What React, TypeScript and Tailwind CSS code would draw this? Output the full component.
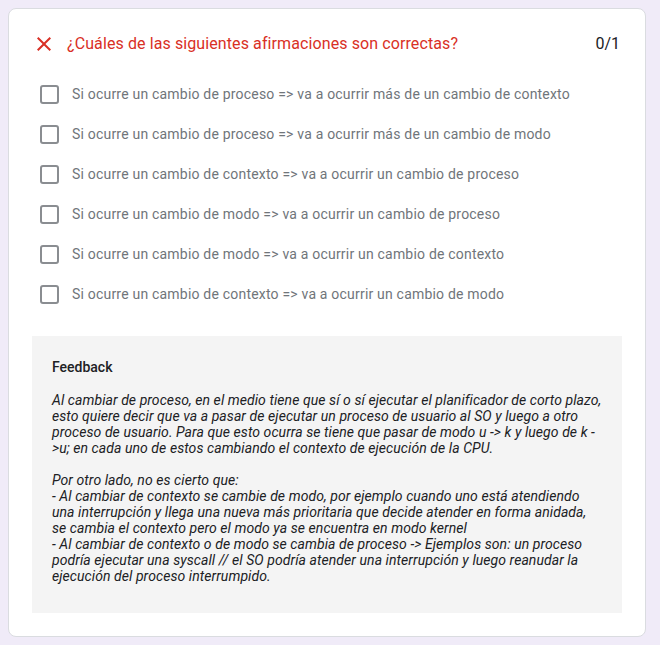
import React from 'react';

const options = [
  'Si ocurre un cambio de proceso => va a ocurrir más de un cambio de contexto',
  'Si ocurre un cambio de proceso => va a ocurrir más de un cambio de modo',
  'Si ocurre un cambio de contexto => va a ocurrir un cambio de proceso',
  'Si ocurre un cambio de modo => va a ocurrir un cambio de proceso',
  'Si ocurre un cambio de modo => va a ocurrir un cambio de contexto',
  'Si ocurre un cambio de contexto => va a ocurrir un cambio de modo',
];

const CloseIcon = () => (
  <svg width="24" height="24" viewBox="0 0 24 24" fill="#d93025">
    <path d="M19 6.41 17.59 5 12 10.59 6.41 5 5 6.41 10.59 12 5 17.59 6.41 19 12 13.41 17.59 19 19 17.59 13.41 12z" />
  </svg>
);

const App = () => {
  return (
    <div
      className="w-[660px] h-[645px] bg-[#f0ebf8] p-2"
      style={{ fontFamily: 'Roboto, "Noto Sans", sans-serif' }}
    >
      <div className="w-[638px] h-[629px] bg-white border border-[#dadce0] rounded-lg px-[23px] pt-[23px]">
        {/* header */}
        <div className="flex items-center h-6">
          <CloseIcon />
          <span className="ml-[11px] text-base text-[#d93025] leading-6 tracking-[0.1px]">
            ¿Cuáles de las siguientes afirmaciones son correctas?
          </span>
          <span className="ml-auto text-base text-[#202124] leading-6 pr-[2px]">0/1</span>
        </div>

        {/* options */}
        <div className="mt-[18px] flex flex-col">
          {options.map((opt) => (
            <div key={opt} className="flex items-center h-10 pl-2">
              <div className="w-[19px] h-[19px] border-2 border-[#8a8d91] rounded-[3px]" />
              <span className="ml-[13px] text-sm text-[#70757a] tracking-[0.2px]">{opt}</span>
            </div>
          ))}
        </div>

        {/* feedback */}
        <div className="mt-[22px] h-[277px] bg-[#f4f4f4] pl-5 pr-[18px] pt-[23px] text-sm text-[#202124] leading-4">
          <div className="font-medium">Feedback</div>
          <div className="mt-[17px] italic tracking-[0.07px]">
            <p>
              Al cambiar de proceso, en el medio tiene que sí o sí ejecutar el planificador de corto plazo,
              esto quiere decir que va a pasar de ejecutar un proceso de usuario al SO y luego a otro
              proceso de usuario. Para que esto ocurra se tiene que pasar de modo u -&gt; k y luego de k -
              &gt;u; en cada uno de estos cambiando el contexto de ejecución de la CPU.
            </p>
            <p className="mt-4">
              Por otro lado, no es cierto que:
              <br />- Al cambiar de contexto se cambie de modo, por ejemplo cuando uno está atendiendo
              una interrupción y llega una nueva más prioritaria que decide atender en forma anidada,
              se cambia el contexto pero el modo ya se encuentra en modo kernel
              <br />- Al cambiar de contexto o de modo se cambia de proceso -&gt; Ejemplos son: un proceso
              podría ejecutar una syscall // el SO podría atender una interrupción y luego reanudar la
              ejecución del proceso interrumpido.
            </p>
          </div>
        </div>
      </div>
    </div>
  );
};

export default App;
